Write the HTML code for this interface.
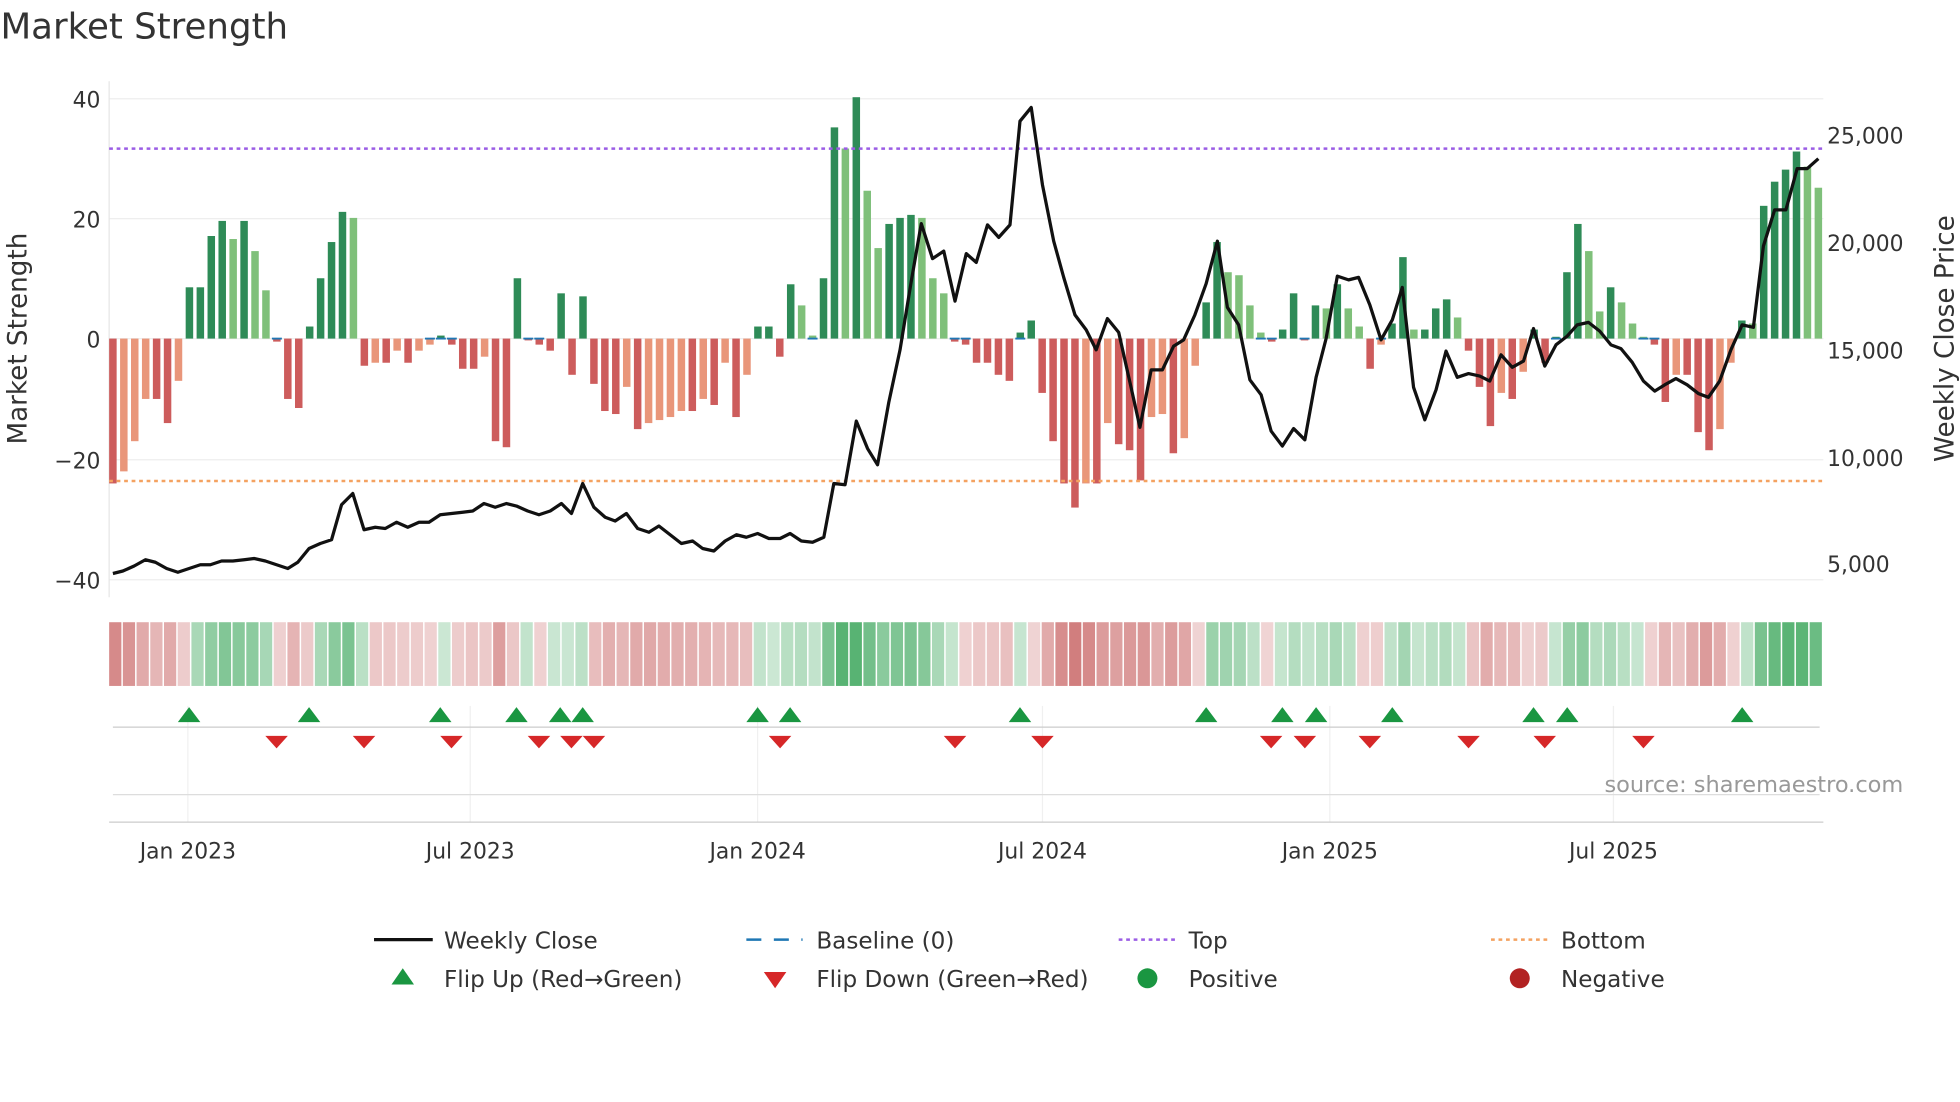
<!DOCTYPE html>
<html><head><meta charset="utf-8"><style>
html,body{margin:0;padding:0;background:#fff;width:1960px;height:1102px;overflow:hidden}
svg{display:block;font-family:"DejaVu Sans","Liberation Sans",sans-serif}
</style></head><body>
<svg id="s" width="1960" height="1102" viewBox="0 0 1568 882" xmlns="http://www.w3.org/2000/svg">
<rect width="1568" height="882" fill="#fff"/>
<text x="0" y="31" font-size="28.5" fill="#333">Market Strength</text>
<g id="grid"></g>
<g id="bars"></g>
<line x1="87" x2="1459" y1="119" y2="119" stroke="#9b5de5" stroke-width="2" stroke-dasharray="3,3"/>
<line x1="87" x2="1459" y1="385" y2="385" stroke="#f4a261" stroke-width="2" stroke-dasharray="3,3"/>
<polyline id="price" fill="none" stroke="#111" stroke-width="2.6" stroke-linejoin="round"/>
<g id="strip"></g>
<g id="marks"></g>
<g font-size="17.5" fill="#333">
<text x="80" y="86" text-anchor="end">40</text>
<text x="80" y="182" text-anchor="end">20</text>
<text x="80" y="278" text-anchor="end">0</text>
<text x="80" y="375" text-anchor="end">−20</text>
<text x="80" y="471" text-anchor="end">−40</text>
<text x="1462" y="115">25,000</text>
<text x="1462" y="201">20,000</text>
<text x="1462" y="287">15,000</text>
<text x="1462" y="373">10,000</text>
<text x="1462" y="458">5,000</text>
<text x="150" y="687" text-anchor="middle">Jan 2023</text>
<text x="376" y="687" text-anchor="middle">Jul 2023</text>
<text x="606" y="687" text-anchor="middle">Jan 2024</text>
<text x="834" y="687" text-anchor="middle">Jul 2024</text>
<text x="1064" y="687" text-anchor="middle">Jan 2025</text>
<text x="1291" y="687" text-anchor="middle">Jul 2025</text>
</g>
<text transform="translate(21,271) rotate(-90)" text-anchor="middle" font-size="21" fill="#333">Market Strength</text>
<text transform="translate(1563,271) rotate(-90)" text-anchor="middle" font-size="21" fill="#333">Weekly Close Price</text>
<text x="1523" y="634" text-anchor="end" font-size="18" fill="#999">source: sharemaestro.com</text>
<g font-size="18.5" fill="#333">
<line x1="299" x2="346" y1="752" y2="752" stroke="#111" stroke-width="2.6"/>
<text x="355" y="759">Weekly Close</text>
<line x1="597" x2="642" y1="752" y2="752" stroke="#1f77b4" stroke-width="2" stroke-dasharray="12,10"/>
<text x="653" y="759">Baseline (0)</text>
<line x1="895" x2="940" y1="752" y2="752" stroke="#9b5de5" stroke-width="2" stroke-dasharray="3,3"/>
<text x="951" y="759">Top</text>
<line x1="1193" x2="1238" y1="752" y2="752" stroke="#f4a261" stroke-width="2" stroke-dasharray="3,3"/>
<text x="1249" y="759">Bottom</text>
<polygon points="313,788 331,788 322,775" fill="#1a9641"/>
<text x="355" y="790">Flip Up (Red→Green)</text>
<polygon points="611,778 629,778 620,791" fill="#d62728"/>
<text x="653" y="790">Flip Down (Green→Red)</text>
<circle cx="918" cy="783" r="8" fill="#1a9641"/>
<text x="951" y="790">Positive</text>
<circle cx="1216" cy="783" r="8" fill="#b22222"/>
<text x="1249" y="790">Negative</text>
</g>
</svg>
<script>
var NS="http://www.w3.org/2000/svg";
function el(p,t,a){var e=document.createElementNS(NS,t);for(var k in a)e.setAttribute(k,a[k]);document.getElementById(p).appendChild(e);return e;}
[79,175,271,368,464].forEach(function(y){el("grid","line",{x1:87,x2:1459,y1:y,y2:y,stroke:"#eee","stroke-width":1});});
el("grid","line",{x1:87,x2:87,y1:65,y2:478,stroke:"#e6e6e6","stroke-width":1});
[150,376,606,834,1064,1291].forEach(function(x){el("grid","line",{x1:x,x2:x,y1:565,y2:658,stroke:"#f0f0f0","stroke-width":1});});
el("grid","line",{x1:90,x2:1456,y1:582,y2:582,stroke:"#ccc","stroke-width":1});
el("grid","line",{x1:90,x2:1456,y1:636,y2:636,stroke:"#ddd","stroke-width":1});
el("grid","line",{x1:87,x2:1459,y1:658,y2:658,stroke:"#ccc","stroke-width":1});
var v=[-24,-22,-17,-10,-10,-14,-7,8.5,8.5,17,19.5,16.5,19.5,14.5,8,-0.5,-10,-11.5,2,10,16,21,20,-4.5,-4,-4,-2,-4,-2,-1,0.5,-1,-5,-5,-3,-17,-18,10,-0.3,-1,-2,7.5,-6,7,-7.5,-12,-12.5,-8,-15,-14,-13.5,-13,-12,-12,-10,-11,-4,-13,-6,2,2,-3,9,5.5,0.5,10,35,31.5,40,24.5,15,19,20,20.5,20,10,7.5,-0.5,-1,-4,-4,-6,-7,1,3,-9,-17,-24,-28,-24,-24,-14,-17.5,-18.5,-23.5,-13,-12.5,-19,-16.5,-4.5,6,16,11,10.5,5.5,1,-0.5,1.5,7.5,-0.3,5.5,5,9,5,2,-5,-1,2.5,13.5,1.5,1.5,5,6.5,3.5,-2,-8,-14.5,-9,-10,-5.5,1.5,-4,0.3,11,19,14.5,4.5,8.5,6,2.5,0.3,-1,-10.5,-6,-6,-15.5,-18.5,-15,-4,3,2.5,22,26,28,31,28.5,25];
var x0=90,dx=(1455-90)/(v.length-1),k=4.83;
v.forEach(function(val,i){var x=x0+i*dx,p=i?v[i-1]:val,c;
 if(val>=0)c=(val>=p)?"#2e8b57":"#7fc07a";else c=(val<=p)?"#cd5c5c":"#e9967a";
 var h=Math.abs(val)*k,y=val>=0?271-h:271;
 el("bars","rect",{x:x-3,y:y,width:6,height:Math.max(h,0.8),fill:c});
 if(Math.abs(val)<1.2)el("bars","line",{x1:x-4,x2:x+4,y1:271,y2:271,stroke:"#1f77b4","stroke-width":1.5});
});
var pts="90,459 98,457 107,453 116,448 124,450 133,455 142,458 151,455 160,452 168,452 177,449 186,449 195,448 203,447 212,449 221,452 230,455 238,450 247,439 256,435 265,432 273,404 282,395 291,424 300,422 308,423 317,418 326,422 335,418 343,418 352,412 361,411 370,410 378,409 387,403 396,406 405,403 413,405 422,409 431,412 440,409 449,403 457,411 466,387 475,406 484,414 492,417 501,411 510,423 519,426 527,421 536,428 545,435 554,433 562,439 571,441 580,433 589,428 597,430 606,427 615,431 624,431 632,427 641,433 650,434 659,430 667,387 676,388 685,337 694,359 702,372 711,322 720,280 729,225 737,179 746,207 755,201 764,241 773,203 781,210 790,180 799,190 808,180 816,97 825,86 834,148 843,193 851,222 860,252 869,264 877,280 886,255 895,266 904,306 912,342 921,296 930,296 939,277 947,272 956,252 965,227 974,193 982,246 991,260 1000,304 1009,316 1017,345 1026,357 1035,343 1044,352 1053,302 1061,271 1070,221 1079,224 1087,222 1096,244 1105,272 1114,256 1122,230 1131,310 1140,336 1149,312 1157,281 1166,302 1175,299 1184,301 1192,305 1201,284 1210,294 1219,289 1227,263 1236,293 1245,276 1254,269 1262,260 1271,258 1280,265 1289,276 1297,279 1306,290 1315,305 1324,313 1332,308 1341,303 1350,308 1359,315 1367,318 1376,305 1385,280 1394,260 1403,262 1411,197 1420,168 1429,168 1438,135 1446,135 1455,127";
document.getElementById("price").setAttribute("points",pts);
var n=125,w=1372/n;
for(var i=0;i<n;i++){var t=i/(n-1)*(v.length-1),a=Math.floor(t),b=Math.min(a+1,v.length-1),val=v[a]+(v[b]-v[a])*(t-a);
 var s=Math.min(Math.abs(val)/30,1),op=0.25+0.55*s,c=val>=0?"rgb(46,160,80)":"rgb(195,85,85)";
 el("strip","rect",{x:87+i*w,y:498,width:w-1.2,height:51,fill:c,"fill-opacity":op.toFixed(2)});}
[151,247,352,413,448,466,606,632,816,965,1026,1053,1114,1227,1254,1394].forEach(function(x){el("marks","polygon",{points:(x-9)+",578 "+(x+9)+",578 "+x+",566",fill:"#1a9641"});});
[221,291,361,431,457,475,624,764,834,1017,1044,1096,1175,1236,1315].forEach(function(x){el("marks","polygon",{points:(x-9)+",589 "+(x+9)+",589 "+x+",599",fill:"#d62728"});});
</script>
</body></html>
